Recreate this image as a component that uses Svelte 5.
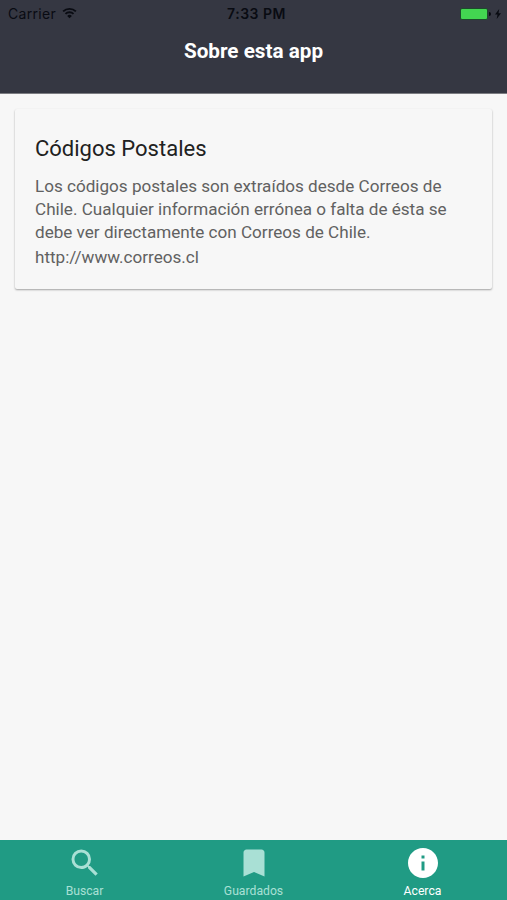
<script lang="ts">
  interface Tab {
    id: string;
    label: string;
    icon: string;
  }

  const tabs: Tab[] = [
    {
      id: 'search',
      label: 'Buscar',
      icon: 'M15.5 14h-.79l-.28-.27A6.471 6.471 0 0 0 16 9.5 6.5 6.5 0 1 0 9.5 16c1.61 0 3.09-.59 4.23-1.57l.27.28v.79l5 4.99L20.49 19l-4.99-5zm-6 0C7.01 14 5 11.99 5 9.5S7.01 5 9.5 5 14 7.01 14 9.5 11.99 14 9.5 14z',
    },
    {
      id: 'saved',
      label: 'Guardados',
      icon: 'M17 3H7c-1.1 0-1.99.9-1.99 2L5 21l7-3 7 3V5c0-1.1-.9-2-2-2z',
    },
    {
      id: 'about',
      label: 'Acerca',
      icon: 'M12 2C6.48 2 2 6.48 2 12s4.48 10 10 10 10-4.48 10-10S17.52 2 12 2zm1 15h-2v-6h2v6zm0-8h-2V7h2v2z',
    },
  ];

  let active = $state('about');
</script>

<div class="screen">
  <header>
    <div class="status-bar">
      <div class="carrier">
        <span>Carrier</span>
        <svg class="wifi" viewBox="0 0 16 12" aria-hidden="true">
          <path d="M1.2 4.3a9.8 9.8 0 0 1 13.6 0M3.7 7a6.2 6.2 0 0 1 8.6 0" />
          <path class="dot" d="M8 11.7 5.5 9.1a3.6 3.6 0 0 1 5 0z" />
        </svg>
      </div>
      <span class="time">7:33 PM</span>
      <div class="power">
        <span class="battery"></span>
        <span class="battery-cap"></span>
        <svg class="bolt" viewBox="0 0 6 10" aria-hidden="true">
          <path d="M4.2 0 0 5.6h2.5L1.7 10 6 4.2H3.5z" />
        </svg>
      </div>
    </div>
    <h1>Sobre esta app</h1>
  </header>

  <main>
    <section class="card">
      <h2>Códigos Postales</h2>
      <p>
        Los códigos postales son extraídos desde Correos de Chile. Cualquier información errónea o
        falta de ésta se debe ver directamente con Correos de Chile.
      </p>
      <p class="link">http://www.correos.cl</p>
    </section>
  </main>

  <nav>
    {#each tabs as tab (tab.id)}
      <button class:active={active === tab.id} onclick={() => (active = tab.id)}>
        <svg viewBox="0 0 24 24" aria-hidden="true"><path d={tab.icon} /></svg>
        <span>{tab.label}</span>
      </button>
    {/each}
  </nav>
</div>

<style>
  :global(body) {
    margin: 0;
  }

  .screen {
    display: flex;
    flex-direction: column;
    height: 100vh;
    overflow: hidden;
    background: #f7f7f7;
    font-family: Roboto, sans-serif;
  }

  header {
    box-sizing: border-box;
    flex-shrink: 0;
    height: 94px;
    background: #353742;
    border-bottom: 1px solid #7b7c81;
  }

  .status-bar {
    display: grid;
    grid-template-columns: 1fr auto 1fr;
    align-items: center;
    height: 27px;
    padding: 0 6px 0 8px;
    color: #090b12;
    font-family: Inter, sans-serif;
    font-size: 14px;
  }

  .carrier,
  .power {
    display: flex;
    align-items: center;
  }

  .carrier {
    gap: 6px;
    letter-spacing: 0.3px;
  }

  .wifi {
    width: 15px;
    height: 12px;
    margin-bottom: 2px;
    fill: none;
    stroke: currentColor;
    stroke-width: 2;
  }

  .wifi .dot {
    fill: currentColor;
    stroke: none;
  }

  .time {
    padding-left: 4px;
    font-weight: 600;
    letter-spacing: 0.5px;
  }

  .power {
    justify-content: flex-end;
  }

  .battery {
    box-sizing: border-box;
    width: 28px;
    height: 12px;
    background: #43d651;
    border: 1px solid #1d4a2b;
    border-radius: 2px;
  }

  .battery-cap {
    width: 2px;
    height: 4px;
    margin: 0 4px 0 1px;
    background: currentColor;
    border-radius: 0 2px 2px 0;
  }

  .bolt {
    width: 6px;
    height: 10px;
    fill: currentColor;
  }

  h1 {
    margin: 12px 0 0;
    color: #fff;
    font-size: 20.7px;
    font-weight: 700;
    line-height: 25px;
    text-align: center;
  }

  main {
    flex: 1;
    padding: 15px;
  }

  .card {
    box-sizing: border-box;
    height: 180px;
    padding: 26px 20px 0;
    background: #f7f7f7;
    border-radius: 2px;
    box-shadow: 0 1px 2px rgba(0, 0, 0, 0.35);
  }

  h2 {
    margin: 0 0 13px;
    color: #212121;
    font-size: 22px;
    font-weight: 400;
    line-height: 27px;
  }

  p {
    margin: 0;
    color: #616161;
    font-size: 17.1px;
    line-height: 23px;
  }

  .link {
    margin-top: 2px;
  }

  nav {
    display: flex;
    flex-shrink: 0;
    height: 60px;
    background: #209b84;
  }

  button {
    display: flex;
    flex: 1;
    flex-direction: column;
    align-items: center;
    padding: 5px 0 0;
    border: 0;
    background: none;
    color: #a9e0d5;
    font: 12.2px/14px Roboto, sans-serif;
  }

  button svg {
    width: 36px;
    height: 36px;
    margin-bottom: 3px;
    fill: currentColor;
  }

  button.active {
    color: #fff;
  }
</style>
